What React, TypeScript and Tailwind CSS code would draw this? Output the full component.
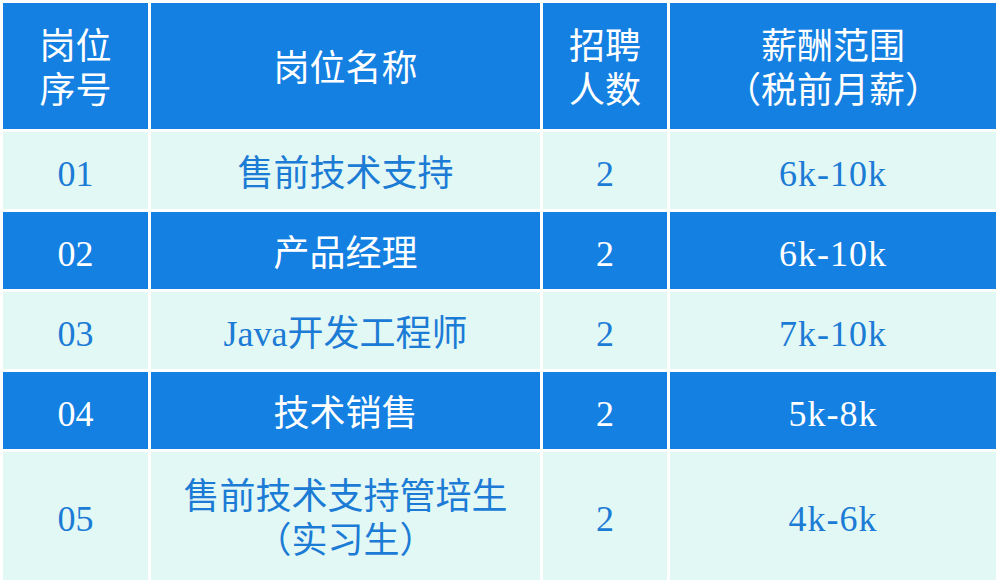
import React from "react";

const rows = [
  { no: "01", name: ["售前技术支持"], count: "2", pay: "6k-10k", dark: false },
  { no: "02", name: ["产品经理"], count: "2", pay: "6k-10k", dark: true },
  { no: "03", name: ["Java开发工程师"], count: "2", pay: "7k-10k", dark: false },
  { no: "04", name: ["技术销售"], count: "2", pay: "5k-8k", dark: true },
  { no: "05", name: ["售前技术支持管培生", "（实习生）"], count: "2", pay: "4k-6k", dark: false },
];

const font = { fontFamily: '"Liberation Serif", "Noto Sans CJK SC", serif' };

function Cell({ dark, children }: { dark: boolean; children: React.ReactNode }) {
  return (
    <div
      className={
        dark
          ? "flex flex-col items-center justify-center pt-[6px] bg-[#1380e2] text-white text-[36px] leading-[44px] text-center"
          : "flex flex-col items-center justify-center pt-[6px] bg-[#e2f8f5] text-[#1b7bd5] text-[36px] leading-[44px] text-center"
      }
    >
      {children}
    </div>
  );
}

export default function App() {
  return (
    <div className="w-[1000px] h-[584px] bg-white" style={font}>
      <div className="grid grid-cols-[145px_389px_124px_326px] grid-rows-[126px_77px_77px_77px_77px_128px] gap-[3px] pl-[3px] pt-[3px]">
        <Cell dark>
          <span>岗位</span>
          <span>序号</span>
        </Cell>
        <Cell dark>
          <span>岗位名称</span>
        </Cell>
        <Cell dark>
          <span>招聘</span>
          <span>人数</span>
        </Cell>
        <Cell dark>
          <span>薪酬范围</span>
          <span>（税前月薪）</span>
        </Cell>
        {rows.map((r) => (
          <React.Fragment key={r.no}>
            <Cell dark={r.dark}>
              <span>{r.no}</span>
            </Cell>
            <Cell dark={r.dark}>
              {r.name.map((n) => (
                <span key={n}>{n}</span>
              ))}
            </Cell>
            <Cell dark={r.dark}>
              <span>{r.count}</span>
            </Cell>
            <Cell dark={r.dark}>
              <span className="tracking-[1px]">{r.pay}</span>
            </Cell>
          </React.Fragment>
        ))}
      </div>
    </div>
  );
}
